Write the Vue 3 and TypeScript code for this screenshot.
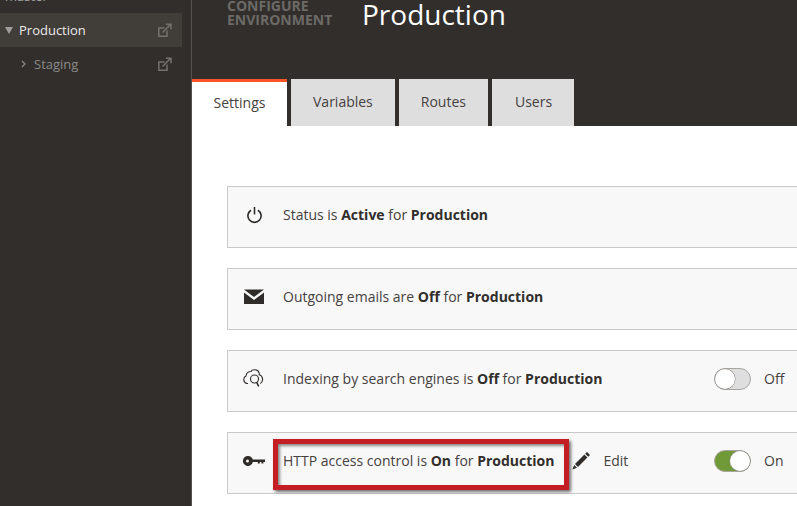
<script setup lang="ts">
const rows = [
  { icon: 'power', parts: ['Status is ', 'Active', ' for ', 'Production'] },
  { icon: 'mail', parts: ['Outgoing emails are ', 'Off', ' for ', 'Production'] },
  { icon: 'search', parts: ['Indexing by search engines is ', 'Off', ' for ', 'Production'], toggle: 'Off' },
  { icon: 'key', parts: ['HTTP access control is ', 'On', ' for ', 'Production'], toggle: 'On', edit: true }
]
const tabs = ['Settings', 'Variables', 'Routes', 'Users']
</script>

<template>
  <div class="page">
    <aside class="sidebar">
      <div class="branch-name">master</div>
      <div class="env env--active">
        <span class="caret"></span>
        <span class="env__name">Production</span>
        <svg class="ext" width="15" height="15" viewBox="0 0 15 15" fill="none" stroke="currentColor" stroke-width="1.5">
          <path d="M10 7.5V13.2H1.8V5H7.5" />
          <path d="M5.5 9.5L13.5 1.5M9 1.2h5v5" />
        </svg>
      </div>
      <div class="env env--child">
        <svg class="chevron" width="5" height="8" viewBox="0 0 5 8" fill="none" stroke="currentColor" stroke-width="1.2">
          <path d="M1 1l3 3-3 3" />
        </svg>
        <span class="env__name">Staging</span>
        <svg class="ext" width="15" height="15" viewBox="0 0 15 15" fill="none" stroke="currentColor" stroke-width="1.5">
          <path d="M10 7.5V13.2H1.8V5H7.5" />
          <path d="M5.5 9.5L13.5 1.5M9 1.2h5v5" />
        </svg>
      </div>
    </aside>

    <main class="main">
      <header class="header">
        <div class="title-row">
          <div class="eyebrow">Configure<br />Environment</div>
          <h1 class="title">Production</h1>
        </div>
        <nav class="tabs">
          <div v-for="(tab, i) in tabs" :key="tab" class="tab" :class="{ 'tab--active': i === 0 }">{{ tab }}</div>
        </nav>
      </header>

      <section class="content">
        <div v-for="row in rows" :key="row.icon" class="row">
          <div class="row__icon">
            <svg v-if="row.icon === 'power'" width="17" height="18" viewBox="0 0 17 18" fill="none" stroke="#2f2c2a" stroke-width="1.6">
              <path d="M8.5 1v7.5" />
              <path d="M5 4.2a6.6 6.6 0 1 0 7 0" />
            </svg>
            <svg v-else-if="row.icon === 'mail'" width="20" height="15" viewBox="0 0 20 15" fill="#2f2c2a">
              <path d="M0 .5h20L10 8z" />
              <path d="M0 3.5L10 11l10-7.5V15H0z" />
            </svg>
            <svg v-else-if="row.icon === 'search'" width="24" height="21" viewBox="0 0 24 21" fill="none" stroke="#2f2c2a" stroke-width="1.1">
              <path d="M6 15.5H5a4 4 0 0 1-1-7.5 5 5 0 0 1 5-4.5c.8-2.2 6.8-2.6 8 1 .3 1 .3 1.5.2 2.2 3.6.8 5 6.5 1 8.8" />
              <circle cx="12.5" cy="11" r="4" />
              <path d="M14.7 14.4l2 4" stroke-width="1.5" />
            </svg>
            <svg v-else width="22" height="10" viewBox="0 0 22 10" fill="#2f2c2a">
              <path fill-rule="evenodd" d="M5 0a5 5 0 0 1 4.8 3.5H22V6h-1.6v1.6h-2V6h-1.6v1.6h-2V6H9.8A5 5 0 1 1 5 0zm-.5 3.5a1.5 1.5 0 1 0 0 3 1.5 1.5 0 0 0 0-3z" />
            </svg>
          </div>
          <div class="row__text">
            {{ row.parts[0] }}<strong>{{ row.parts[1] }}</strong>{{ row.parts[2] }}<strong>{{ row.parts[3] }}</strong>
          </div>
          <div v-if="row.edit" class="row__edit">
            <svg width="20" height="20" viewBox="0 0 20 20" fill="#2f2c2a">
              <path d="M16 1l3 3-1.8 1.8-3-3zM13.4 3.6l3 3L7 16l-3-3zM3.2 14l2.8 2.8-4.6 1.8z" />
            </svg>
            <span>Edit</span>
          </div>
          <div v-if="row.toggle" class="row__toggle">
            <span class="switch" :class="{ 'switch--on': row.toggle === 'On' }"><span class="knob"></span></span>
            <span class="switch__label">{{ row.toggle }}</span>
          </div>
          <div v-if="row.edit" class="highlight"></div>
        </div>
      </section>
    </main>
  </div>
</template>

<style scoped>
.page {
  display: flex;
  width: 797px;
  height: 506px;
  overflow: hidden;
  font-family: "Open Sans", "Liberation Sans", sans-serif;
  background: #fff;
}

.sidebar {
  flex: 0 0 192px;
  box-sizing: border-box;
  background: #312e2b;
  border-right: 1px solid #55524f;
  padding-right: 9px;
}

.branch-name {
  height: 13px;
  margin-top: -10px;
  margin-bottom: 10px;
  padding-left: 5px;
  font-size: 13px;
  line-height: 13px;
  color: #a5a3a1;
}

.env {
  display: flex;
  align-items: center;
  height: 34px;
  color: #a8a6a4;
  font-size: 13px;
}

.env--active {
  background: #413d39;
  color: #ebeae9;
}

.env--child {
  color: #8d8a88;
}

.caret {
  width: 0;
  height: 0;
  margin: 0 6px 0 5px;
  border-left: 4px solid transparent;
  border-right: 4px solid transparent;
  border-top: 7px solid #a09e9c;
}

.chevron {
  margin: 0 8px 0 21px;
}

.env__name {
  flex: 1;
}

.ext {
  margin-right: 10px;
  color: #74716e;
}

.main {
  flex: 1;
  min-width: 0;
}

.header {
  box-sizing: border-box;
  height: 126px;
  background: #312e2b;
  display: flex;
  flex-direction: column;
  justify-content: space-between;
  overflow: hidden;
}

.title-row {
  display: flex;
  padding-left: 35px;
}

.eyebrow {
  width: 135px;
  margin-top: -1px;
  font-size: 14px;
  line-height: 14px;
  font-weight: 700;
  text-transform: uppercase;
  color: #6c6a67;
}

.title {
  margin: -5px 0 0;
  font-size: 28px;
  line-height: 38px;
  font-weight: 400;
  color: #fff;
}

.tabs {
  display: flex;
  gap: 4px;
}

.tab {
  box-sizing: border-box;
  height: 47px;
  padding: 0 22px;
  background: #dedede;
  font-size: 14px;
  line-height: 45px;
  color: #45413e;
}

.tab:last-child {
  padding-left: 23px;
}

.tab--active {
  width: 95px;
  padding: 0;
  text-align: center;
  background: #fff;
  border-top: 3px solid #fb5228;
  line-height: 42px;
}

.content {
  display: flex;
  flex-direction: column;
  gap: 20px;
  padding: 60px 0 0 35px;
}

.row {
  position: relative;
  box-sizing: border-box;
  display: flex;
  align-items: center;
  width: 600px;
  height: 62px;
  flex: none;
  padding: 0 0 5px 14px;
  background: #f8f8f8;
  border: 1px solid #c9c9c9;
  font-size: 14px;
  color: #45413e;
}

.row__icon {
  display: flex;
  align-items: center;
  justify-content: center;
  width: 24px;
  margin-right: 17px;
  flex: none;
}

.row__text strong {
  font-weight: 700;
  color: #312e2b;
}

.row__edit {
  display: flex;
  align-items: center;
  gap: 12px;
  margin-left: 17px;
}

.row__toggle {
  position: absolute;
  left: 486px;
  top: 0;
  bottom: 5px;
  display: flex;
  align-items: center;
  gap: 13px;
}

.switch {
  box-sizing: border-box;
  position: relative;
  display: block;
  width: 37px;
  height: 22px;
  border: 1px solid #a9a6a2;
  border-radius: 11px;
  background: #dedede;
}

.switch--on {
  background: #6f9a37;
}

.knob {
  position: absolute;
  left: 0;
  top: 0;
  width: 20px;
  height: 20px;
  border-radius: 50%;
  background: #fff;
  box-shadow: 0 0 0 0.5px #8d8a86;
}

.switch--on .knob {
  left: 15px;
}

.highlight {
  position: absolute;
  left: 45px;
  top: 6px;
  width: 296px;
  height: 51px;
  box-sizing: border-box;
  border: 5px solid #c41e24;
  box-shadow: 2px 2px 3px rgba(0, 0, 0, 0.55), inset 2px 2px 3px rgba(0, 0, 0, 0.45);
  pointer-events: none;
}
</style>
